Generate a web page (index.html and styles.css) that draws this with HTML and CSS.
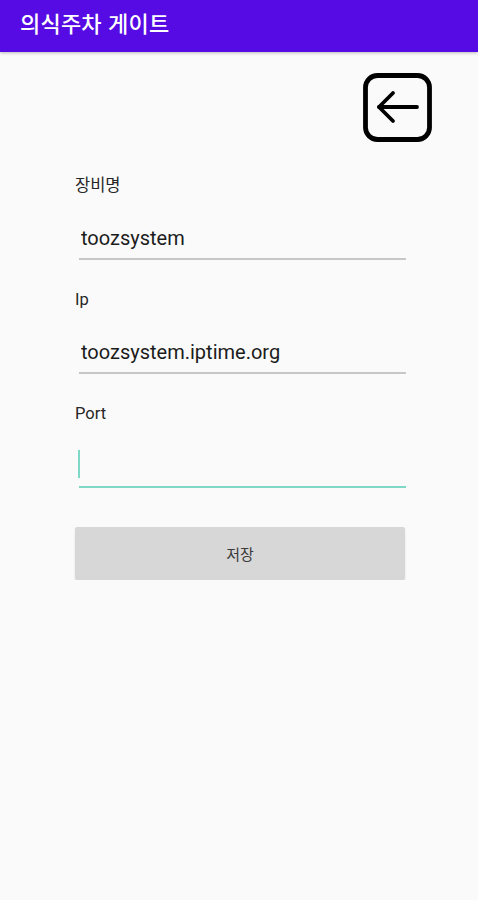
FILE: index.html
```html
<!DOCTYPE html>
<html lang="ko">
<head>
  <meta charset="UTF-8" />
  <title>의식주차 게이트</title>
  <meta name="viewport" content="width=device-width, initial-scale=1" />
  <link rel="stylesheet" href="styles.css">
</head>
<body>
  <header class="app-bar">
    <h1 class="app-title">의식주차 게이트</h1>
  </header>

  <main class="content">
    <div class="back-row">
      <button class="back-button" type="button" aria-label="뒤로">
        <svg width="70" height="70" viewBox="0 0 70 70">
          <rect x="2.5" y="2.5" width="64" height="64" rx="12" fill="none" stroke="#000" stroke-width="4.8" />
          <path d="M16 34 H54" fill="none" stroke="#000" stroke-width="3.8" stroke-linecap="round" />
          <path d="M30 20 L16 34 L30 48" fill="none" stroke="#000" stroke-width="3.8" stroke-linecap="round" stroke-linejoin="round" />
        </svg>
      </button>
    </div>

    <form class="settings-form">
      <div class="field">
        <label for="deviceName">장비명</label>
        <div class="input-line">
          <input type="text" id="deviceName" value="toozsystem" />
        </div>
      </div>

      <div class="field">
        <label for="deviceIp">Ip</label>
        <div class="input-line">
          <input type="text" id="deviceIp" value="toozsystem.iptime.org" />
        </div>
      </div>

      <div class="field">
        <label for="devicePort">Port</label>
        <div class="input-line focused">
          <span class="caret"></span>
          <input type="text" id="devicePort" value="" />
        </div>
      </div>

      <button class="save-button" type="button">저장</button>
    </form>
  </main>
</body>
</html>
```

FILE: styles.css
```css
body {
  margin: 0;
  padding: 0;
  background: #fafafa;
  font-family: Roboto, "Noto Sans CJK KR", sans-serif;
  color: #222;
}

.app-bar {
  height: 52px;
  background: #560be4;
  display: flex;
  align-items: center;
  padding-left: 20px;
  box-shadow: 0 1px 3px rgba(0,0,0,0.25);
}

.app-title {
  margin: 0;
  color: white;
  font-family: "Noto Sans CJK KR", sans-serif;
  font-size: 22px;
  font-weight: 500;
  line-height: 1;
  padding-bottom: 9px;
  letter-spacing: 0.2px;
}

.back-row {
  display: flex;
  justify-content: flex-end;
  padding: 21px 45px 0 0;
}

.back-button {
  background: none;
  border: none;
  padding: 0;
  width: 70px;
  height: 70px;
  cursor: pointer;
}

.back-button svg {
  display: block;
}

.settings-form {
  margin: 33px 0 0 75px;
  width: 331px;
}

.field {
  margin-bottom: 30px;
}

.field label {
  display: block;
  height: 20px;
  line-height: 20px;
  font-family: Roboto, "Noto Sans CJK KR", sans-serif;
  font-size: 16.5px;
  color: #262626;
}

.input-line {
  position: relative;
  margin: 21px 0 0 4px;
  height: 41px;
  border-bottom: 2px solid #c6c6c6;
}

.input-line.focused {
  border-bottom-color: #7fd8c6;
}

.input-line input {
  width: 100%;
  height: 41px;
  box-sizing: border-box;
  border: none;
  outline: none;
  background: transparent;
  padding: 0 0 0 2px;
  font-family: Roboto, sans-serif;
  font-size: 20px;
  color: #1c1c1c;
}

.caret {
  position: absolute;
  left: -1px;
  top: 5px;
  width: 2px;
  height: 28px;
  background: #7fd8c6;
}

.save-button {
  display: block;
  width: 330px;
  height: 53px;
  margin-top: 39px;
  border: none;
  border-radius: 2px;
  background: #d7d7d7;
  box-shadow: 0 1px 2px rgba(0,0,0,0.12);
  font-family: "Noto Sans CJK KR", sans-serif;
  font-size: 15px;
  color: #3a3a3a;
}
```
